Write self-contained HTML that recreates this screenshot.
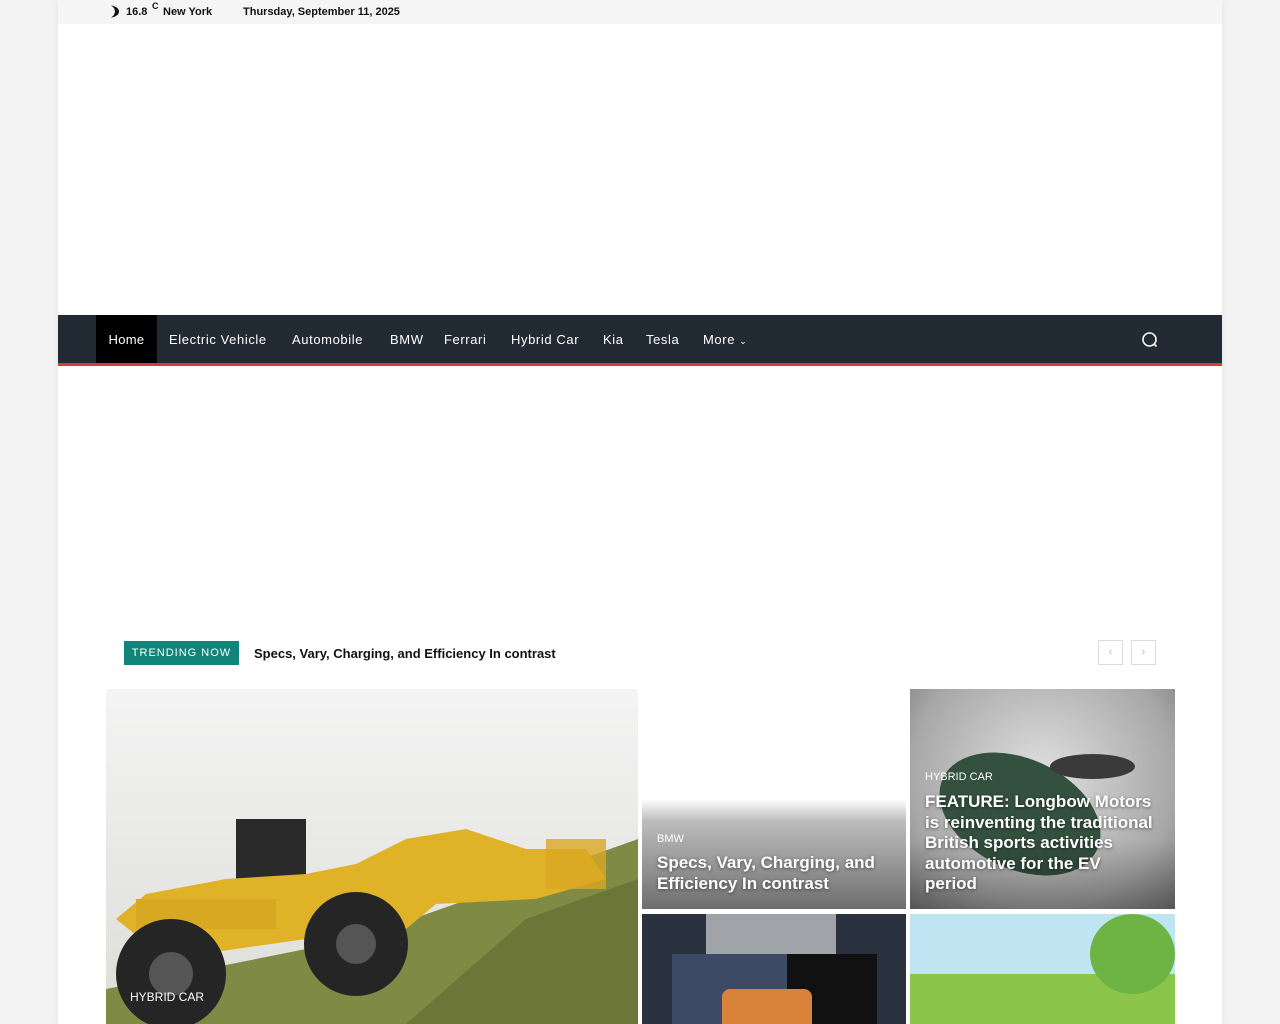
<!DOCTYPE html>
<html><head><meta charset="utf-8"><style>
*{margin:0;padding:0;box-sizing:border-box}
body{width:1280px;height:1024px;overflow:hidden;background:#f3f3f3;font-family:"Liberation Sans",sans-serif;position:relative}
.wrap{position:absolute;left:58px;top:0;width:1164px;height:1024px;background:#fff;box-shadow:0 0 6px rgba(0,0,0,.08)}
.top{height:24px;background:#f5f5f5;font-size:11px;font-weight:bold;color:#111;position:relative}
.top span{position:absolute;top:6px}
.nav{position:absolute;top:315px;left:0;width:1164px;background:#222a33;border-bottom:3px solid #d73a3a;height:51px}
.nav a{position:absolute;top:0;height:48px;line-height:49px;color:#fff;font-size:13px;letter-spacing:.6px}
.home{background:#000;left:38px;width:61px;text-align:center;letter-spacing:.3px!important}
.trend{position:absolute;left:66px;top:641px;width:115px;height:24px;background:#12857a;color:#fff;font-size:11px;letter-spacing:1px;line-height:24px;text-align:center}
.tt{position:absolute;left:196px;top:646px;font-size:13px;font-weight:bold;color:#111}
.arr{position:absolute;top:640px;width:25px;height:25px;border:1px solid #ddd;color:#bbb;font-size:11px;text-align:center;line-height:23px}
.tile{position:absolute;overflow:hidden}
.cat{position:absolute;color:#fff;font-size:11px}
.h{position:absolute;color:#fff;font-weight:bold;font-size:17px;line-height:20.5px;text-shadow:0 1px 3px rgba(0,0,0,.5);white-space:nowrap}
</style></head><body>
<div class="wrap">
<div class="top"><svg style="position:absolute;left:52px;top:5px" width="10" height="13" viewBox="0 0 10 13"><path d="M1 0.5A6 6 0 0 1 1 12.5A4 6 0 0 0 1 0.5Z" fill="#111"/><path d="M1 0.5Q9 2 9 6.5Q9 11 1 12.5Q5 10 5 6.5Q5 3 1 0.5Z" fill="#111"/></svg><span style="left:68px">16.8</span><span style="left:94px;top:1px;font-size:9px">C</span><span style="left:105px">New York</span><span style="left:185px">Thursday, September 11, 2025</span></div>
<div class="nav">
<a class="home">Home</a><a style="left:111px">Electric Vehicle</a><a style="left:234px">Automobile</a><a style="left:332px">BMW</a><a style="left:386px">Ferrari</a><a style="left:453px">Hybrid Car</a><a style="left:545px">Kia</a><a style="left:588px">Tesla</a><a style="left:645px">More <span style="font-size:9px">⌄</span></a>
<svg style="position:absolute;left:1083px;top:16px" width="18" height="18" viewBox="0 0 18 18"><circle cx="8.5" cy="8.5" r="6.5" fill="none" stroke="#fff" stroke-width="1.6"/><path d="M13 13l2.5 2.5" stroke="#fff" stroke-width="1.6"/></svg>
</div>
<div class="trend">TRENDING NOW</div>
<div class="tt">Specs, Vary, Charging, and Efficiency In contrast</div>
<div class="arr" style="left:1040px">‹</div><div class="arr" style="left:1073px">›</div>
<svg class="tile" style="left:48px;top:689px" width="532" height="335" viewBox="0 0 532 335">
<defs><linearGradient id="sky" x1="0" y1="0" x2="0" y2="1"><stop offset="0" stop-color="#f4f4f4"/><stop offset="1" stop-color="#dcdcd8"/></linearGradient></defs>
<rect width="532" height="335" fill="url(#sky)"/>
<path d="M0 335L0 300L250 250L420 190L532 150L532 335Z" fill="#7f8a45"/>
<path d="M300 335L420 230L532 190L532 335Z" fill="#6b7638"/>
<rect x="130" y="130" width="70" height="80" fill="#2a2a2a"/>
<path d="M10 230L40 205L120 190L200 185L250 175L300 150L360 140L420 160L480 160L500 190L430 210L330 215L300 240L200 250L60 270Z" fill="#e0b228"/>
<rect x="30" y="210" width="140" height="30" fill="#d9a823"/>
<circle cx="65" cy="285" r="55" fill="#252525"/><circle cx="65" cy="285" r="22" fill="#555"/>
<circle cx="250" cy="255" r="52" fill="#252525"/><circle cx="250" cy="255" r="20" fill="#555"/>
<rect x="440" y="150" width="60" height="50" fill="#d9a823" opacity=".8"/>
<text x="24" y="312" fill="#fff" font-size="12" font-family="Liberation Sans">HYBRID CAR</text>
</svg>
<div class="tile" style="left:584px;top:689px;width:264px;height:220px;background:linear-gradient(180deg,#fff 0%,#fff 50%,#bdbdbd 60%,#6e6e6e 100%)">
<div class="cat" style="left:15px;top:144px">BMW</div>
<div class="h" style="left:15px;top:164px">Specs, Vary, Charging, and<br>Efficiency In contrast</div></div>
<div class="tile" style="left:852px;top:689px;width:265px;height:220px;background:radial-gradient(ellipse at 50% 40%,#e0e0e0,#a8a8a8 70%,#7a7a7a)">
<div style="position:absolute;left:25px;top:70px;width:170px;height:110px;border-radius:50%;background:#34503f;transform:rotate(25deg)"></div>
<div style="position:absolute;left:140px;top:65px;width:85px;height:25px;border-radius:50%;background:#3a3a3a"></div>
<div style="position:absolute;left:0;top:150px;width:265px;height:70px;background:linear-gradient(180deg,rgba(0,0,0,0),rgba(0,0,0,.3))"></div>
<div class="cat" style="left:15px;top:82px">HYBRID CAR</div>
<div class="h" style="left:15px;top:103px">FEATURE: Longbow Motors<br>is reinventing the traditional<br>British sports activities<br>automotive for the EV<br>period</div></div>
<div class="tile" style="left:584px;top:914px;width:264px;height:110px;background:#2a3240">
<div style="position:absolute;left:64px;top:0;width:130px;height:40px;background:#a0a4a8"></div>
<div style="position:absolute;left:30px;top:40px;width:200px;height:70px;background:#3d4a66"></div>
<div style="position:absolute;left:145px;top:40px;width:90px;height:70px;background:#111"></div>
<div style="position:absolute;left:80px;top:75px;width:90px;height:35px;background:#d9823a;border-radius:8px 8px 0 0"></div></div>
<div class="tile" style="left:852px;top:914px;width:265px;height:110px;background:#bfe4f2">
<div style="position:absolute;left:0;top:60px;width:265px;height:50px;background:#8bc64a"></div>
<div style="position:absolute;left:180px;top:0;width:85px;height:80px;border-radius:50%;background:#6db444"></div></div>
</div>
</body></html>
